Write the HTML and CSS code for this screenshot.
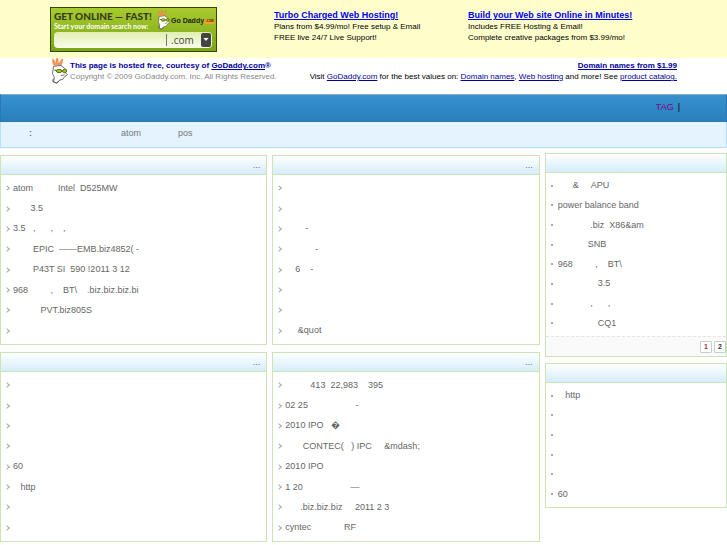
FILE: index.html
```html
<!DOCTYPE html>
<html lang="en">
<head>
<meta charset="utf-8">
<title>Home</title>
<link rel="stylesheet" href="styles.css">
</head>
<body>
<svg class="sprites" aria-hidden="true">
  <symbol id="mascot" viewBox="0 0 20 28">
    <path d="M4 8C1 5 3 3 2 1c3 2 2 4 4 6C6 4 5 3 7 0c2 3 0 4 2 7 1-3 1-4 4-6-1 3 0 4-2 7" fill="#f9a25f" stroke="#e8692d" stroke-width=".7"/>
    <path d="M3 9l8-1 4 3 1 5 2 2-3 2-2 3-4 1-2 3-4-1 1-5-2-4z" fill="#fff" stroke="#555" stroke-width=".9"/>
    <path d="M3 22l-1 3 4 2 3-2M11 19l4-1" fill="none" stroke="#555" stroke-width=".9"/>
    <path d="M4 13l5 1m3 0l5-1" stroke="#333"/>
    <ellipse cx="9" cy="14" rx="3" ry="1.8" fill="#a5c718" stroke="#4d6510"/>
    <ellipse cx="15" cy="14" rx="2.2" ry="1.8" fill="#a5c718" stroke="#4d6510"/>
  </symbol>
</svg>
<header>
  <div class="ads">
    <form class="search">
      <div class="search-top">
        <div class="pitch"><strong>GET ONLINE — FAST!</strong><label for="domain">Start your domain search now:</label></div>
        <svg class="face" aria-hidden="true"><use href="#mascot"/></svg>
        <span class="brand">Go Daddy<i>.COM</i></span>
      </div>
      <div class="field">
        <input id="domain" type="text">
        <select aria-label="Extension"><option>.com</option></select>
        <svg class="drop" viewBox="0 0 10 14" aria-hidden="true"><rect width="10" height="14" rx="2" fill="#444"/><path d="M2.5 5h5L5 8z" fill="#fff"/></svg>
      </div>
    </form>
    <div class="ad"><a href="#">Turbo Charged Web Hosting!</a><p>Plans from $4.99/mo! Free setup &amp; Email</p><p>FREE live 24/7 Live Support!</p></div>
    <div class="ad"><a href="#">Build your Web site Online in Minutes!</a><p>Includes FREE Hosting &amp; Email!</p><p>Complete creative packages from $3.99/mo!</p></div>
  </div>
  <div class="courtesy">
    <svg class="logo" aria-hidden="true"><use href="#mascot"/></svg>
    <div class="host"><p class="navy">This page is hosted free, courtesy of <a href="#">GoDaddy.com</a>®</p><p class="copy">Copyright © 2009 GoDaddy.com. Inc. All Rights Reserved.</p></div>
    <div class="values"><p class="navy"><a href="#">Domain names from $1.99</a></p><p>Visit <a href="#">GoDaddy.com</a> for the best values on: <a href="#">Domain names</a>, <a href="#">Web hosting</a> and more! See <a href="#">product catalog.</a></p></div>
  </div>
</header>
<nav>
  <div class="bar"><a href="#">TAG</a><span>|</span></div>
  <div class="keys"><b>:</b><a href="#">atom</a><a href="#">pos</a></div>
</nav>
<main>
  <div class="column">
    <section><h2><a href="#">...</a></h2>
      <ul>
        <li>atom          Intel  D525MW</li>
        <li>       3.5</li>
        <li>3.5   ,      ,    ,</li>
        <li>        EPIC  ——EMB.biz4852( -</li>
        <li>        P43T SI  590 !2011 3 12</li>
        <li>968         ,    BT\    .biz.biz.biz.bi</li>
        <li>           PVT.biz805S</li>
        <li></li>
      </ul>
    </section>
    <section><h2><a href="#">...</a></h2>
      <ul>
        <li></li>
        <li></li>
        <li></li>
        <li></li>
        <li>60</li>
        <li>   http</li>
        <li></li>
        <li></li>
      </ul>
    </section>
  </div>
  <div class="column">
    <section><h2><a href="#">...</a></h2>
      <ul>
        <li></li>
        <li></li>
        <li>        -</li>
        <li>            -</li>
        <li>    6    -</li>
        <li></li>
        <li></li>
        <li>     &amp;quot</li>
      </ul>
    </section>
    <section><h2><a href="#">...</a></h2>
      <ul>
        <li>          413  22,983    395</li>
        <li>02 25                   -</li>
        <li>2010 IPO   �</li>
        <li>       CONTEC(   ) IPC     &amp;mdash;</li>
        <li>2010 IPO</li>
        <li>1 20                   —</li>
        <li>      .biz.biz.biz     2011 2 3</li>
        <li>cyntec             RF</li>
      </ul>
    </section>
  </div>
  <aside class="column">
    <section><h2></h2>
      <ul>
        <li>      &amp;     APU</li>
        <li>power balance band</li>
        <li>             .biz  X86&amp;am</li>
        <li>            SNB</li>
        <li>968         ,    BT\</li>
        <li>                3.5</li>
        <li>             ,      ,</li>
        <li>                CQ1</li>
      </ul>
      <div class="pager"><button type="button" class="on">1</button><button type="button">2</button></div>
    </section>
    <section><h2></h2>
      <ul class="short">
        <li>   http</li>
        <li></li>
        <li></li>
        <li></li>
        <li></li>
        <li>60</li>
      </ul>
    </section>
  </aside>
</main>
</body>
</html>
```
FILE: styles.css
```css
* { box-sizing: border-box; }
body { margin: 0; background: #fff; color: #000; font: 8px/11px "Liberation Sans", Arial, sans-serif; overflow: hidden; }
p, h2, ul { margin: 0; padding: 0; }
.sprites { position: absolute; width: 0; height: 0; }
.ads { display: flex; background: #ffc; height: 58px; padding: 7px 50px 6px; }
.search { width: 167px; border: 1px solid #34470b; background: linear-gradient(#a8cb2d, #7ba517); padding: 2px 4px 2px 3px; color: #fff; display: flex; flex-direction: column; }
.search-top { display: flex; height: 22px; white-space: nowrap; }
.pitch { width: 103px; flex: none; }
.search-top strong { display: block; font: 900 10px/12px Lato, sans-serif; color: #343a20; }
.search-top label { display: block; font: bold 7px/9px Lato, sans-serif; }
.face { width: 14px; height: 20px; flex: none; }
.brand { font: bold 7px/20px "Liberation Sans", sans-serif; color: #222; display: flex; align-items: center; }
.brand i { width: 11px; font-size: 3px; line-height: 5px; background: #f4a321; border-radius: 4px; text-align: center; }
.field { display: flex; align-items: center; height: 16px; padding-right: 1px; background: linear-gradient(#e0efb0, #f9fcea); border-radius: 4px; }
.field input { flex: 1; min-width: 0; height: 12px; border: 0; border-right: 1px solid #777; background: none; padding: 0 3px; }
.field select { appearance: none; border: 0; background: none; font: 10px/14px "Open Sans", sans-serif; color: #444; padding: 0 0 0 4px; width: 34px; }
.drop { width: 10px; height: 14px; }
.ad { padding-top: 2px; margin-left: 57px; width: 144px; white-space: nowrap; line-height: 11px; }
.ad + .ad { margin-left: 50px; }
.ad a { display: block; font-weight: bold; font-size: 9px; line-height: 12px; color: #0000f0; }
.courtesy { display: flex; padding: 2px 50px 0; height: 36px; line-height: 11px; white-space: nowrap; }
.logo { width: 20px; height: 26px; flex: none; margin-top: -2px; }
.host { flex: 1; }
.host a, .values a { color: #00009c; }
.navy { color: #00009c; font-weight: bold; }
.copy { color: #888; }
.values { text-align: right; }
.bar { height: 28px; border: 1px solid #277ab5; border-top-color: #8aa9bd; background: linear-gradient(#3990cf, #2980bd); display: flex; justify-content: flex-end; gap: 4px; padding: 0 46px 0 0; font-size: 9px; line-height: 24px; }
.bar a { color: #800080; text-decoration: none; }
.keys { height: 26px; border: 1px solid #b4dffa; border-top: 0; background: #e5f3ff; display: flex; padding-left: 28px; color: #777; font-size: 9px; line-height: 23px; }
.keys a { color: #777; text-decoration: none; margin-left: 37px; }
.keys b + a { margin-left: 89px; }
main { display: grid; grid-template-columns: 267fr 267fr 182fr; gap: 5px; align-items: start; padding-top: 7px; color: #666; font-size: 9px; }
section { border: 1px solid #cbe4b5; margin-bottom: 7px; }
h2 { height: 19px; border-bottom: 1px solid #cbe4b5; background: linear-gradient(#fff, #d5edfd); text-align: right; padding-right: 6px; font-size: 9px; line-height: 19px; font-weight: normal; }
h2 a { color: #666; text-decoration: none; }
ul { list-style: none; display: grid; grid-auto-rows: 1fr; min-height: 169px; padding: 3px 5px; }
li { white-space: pre; display: flex; align-items: center; }
li::before { content: ""; width: 3px; height: 3px; border: solid #aaa; border-width: 1px 1px 0 0; transform: rotate(45deg); margin: 0 4px 0 -1px; flex: none; }
aside { margin-top: -2px; }
aside section { margin-bottom: 6px; }
aside ul { min-height: 163px; }
aside .short { min-height: 124px; }
aside li::before { width: 2px; height: 2px; border: 0; background: #aaa; margin: 0 5px 0 0; transform: none; }
.pager { height: 20px; border-top: 1px dashed #e4e4e4; background: #fafafa; display: flex; justify-content: flex-end; align-items: center; gap: 2px; }
.pager button { width: 12px; height: 12px; padding: 0; border: 1px solid #ccc; border-radius: 1px; background: #fff; color: #333; font: bold 7px/8px "Liberation Sans", sans-serif; }
.pager .on { color: #933; }
```
